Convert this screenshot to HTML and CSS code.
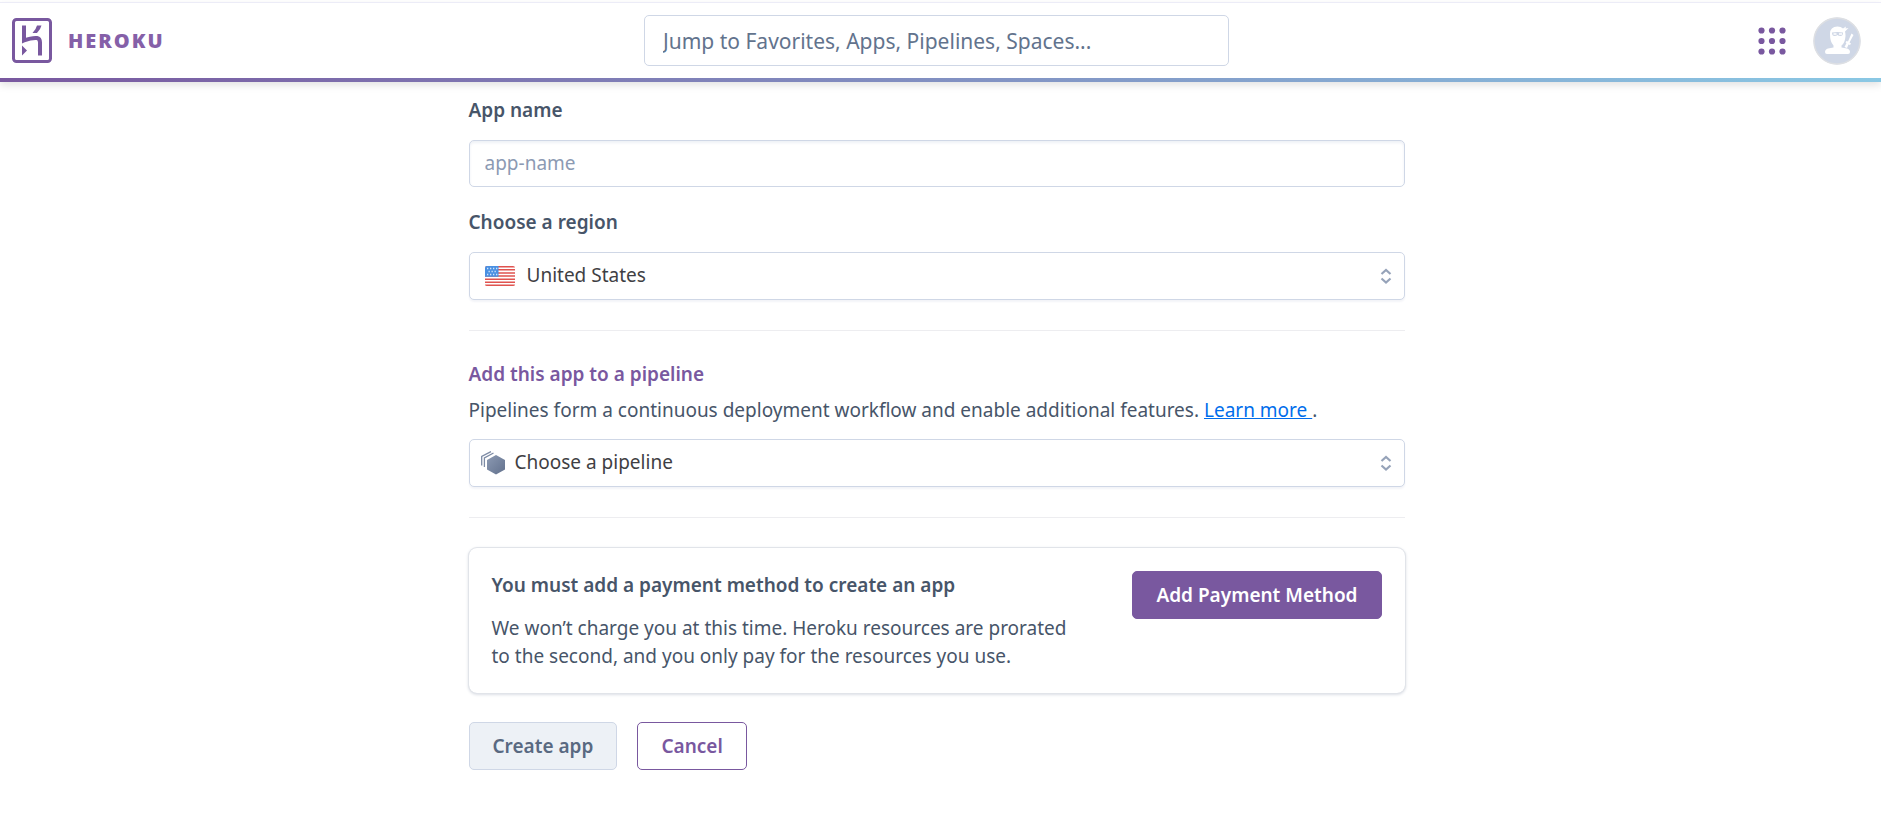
FILE: index.html
```html
<!DOCTYPE html>
<html lang="en">
<head>
<meta charset="utf-8">
<meta name="viewport" content="width=device-width, initial-scale=1">
<title>Create New App | Heroku</title>
<link rel="stylesheet" href="styles.css">
</head>
<body>
<header class="topbar">
  <a class="brand" href="#" aria-label="Heroku">
    <svg class="brand-mark" viewBox="0 0 40 45" aria-hidden="true">
      <rect x="1.5" y="1.5" width="37" height="42" rx="3" fill="none" stroke="#79589f" stroke-width="3"/>
      <path d="M12 7.5V22.500Q20 19.500 25 20Q28 20.500 28 24.500V37.500" fill="none" stroke="#79589f" stroke-width="4"/>
      <path d="M10 27.500L15 32.500L10 37.500Z M25 7.500H29.500Q28.500 11.500 25 15H20.500Q24 11.500 25 7.500Z" fill="#79589f"/>
    </svg>
    <span class="brand-name">HEROKU</span>
  </a>
  <input class="jump" type="search" aria-label="Jump to" placeholder="Jump to Favorites, Apps, Pipelines, Spaces...">
  <div class="tools">
    <button class="icon-button" type="button" aria-label="Apps menu">
      <svg class="dots" viewBox="0 0 28 28" fill="#79589f" aria-hidden="true">
        <circle cx="3.500" cy="3.500" r="3.100"/><circle cx="14" cy="3.500" r="3.100"/><circle cx="24.500" cy="3.500" r="3.100"/>
        <circle cx="3.500" cy="14" r="3.100"/><circle cx="14" cy="14" r="3.100"/><circle cx="24.500" cy="14" r="3.100"/>
        <circle cx="3.500" cy="24.500" r="3.100"/><circle cx="14" cy="24.500" r="3.100"/><circle cx="24.500" cy="24.500" r="3.100"/>
      </svg>
    </button>
    <button class="icon-button" type="button" aria-label="Account">
      <svg class="avatar" viewBox="0 0 48 48" aria-hidden="true">
        <circle cx="24" cy="24" r="23.500" fill="#cfd7e6"/>
        <circle cx="24" cy="24" r="23" fill="none" stroke="#dddfe3" stroke-width="1.500"/>
        <path d="M17 17Q17 9.500 24.500 9.500Q28 9.500 30 11.500L33 9.500L32.500 11.500L35.500 11L32 14.500Q32.500 16 32.500 19Q32 26 28.500 28.500V30.500L34 31.500Q37 32.500 37 35Q37 37 35 37H14Q12 37 12 35Q12 32.500 15 31.500L20.500 30.500V28.500Q17 25 17 17Z" fill="#fff"/>
        <path d="M38.500 16.500L40.500 18L36.500 25.500L38 26.500L37 28L35.500 27.500L34 31L31.500 30L33.500 26L32.500 25.500L33.500 24L35 24.500Z" fill="#fff"/>
        <path d="M19 15.500Q24.500 14.500 30 15.500Q30 19 27.500 19Q25.500 19 24.500 18Q23.500 19 21.500 19Q19 19 19 15.500Z" fill="#cfd7e6"/>
        <path d="M20.500 17H23.500M26 17H29" stroke="#fff" stroke-width="1.500"/>
      </svg>
    </button>
  </div>
</header>

<main class="page">
  <form class="new-app">
    <label class="label" for="app-name">App name</label>
    <input class="field" id="app-name" type="text" placeholder="app-name">

    <label class="label label-region" for="region">Choose a region</label>
    <div class="picker">
      <svg class="picker-icon flag" viewBox="0 0 30 20" aria-hidden="true">
        <rect width="30" height="20" rx="2" fill="#fff"/>
        <path d="M2 0H28Q30 0 30 1.500H0Q0 0 2 0ZM0 3.100H30V4.600H0ZM0 6.200H30V7.700H0ZM0 9.300H30V10.800H0ZM0 12.400H30V13.900H0ZM0 15.500H30V17H0ZM0 18.500H30Q30 20 28 20H2Q0 20 0 18.500Z" fill="#e0534f"/>
        <path d="M2 0H13.500V10.800H0V2Q0 0 2 0Z" fill="#4a90e2"/>
        <path d="M2 2.500H13M3.500 5.500H12M2 8.500H13" stroke="#cfe3fa" stroke-width="1.300" stroke-dasharray="1.300 1.700"/>
      </svg>
      <select class="field select select-region" id="region"><option>United States</option><option>Europe</option></select>
      <svg class="picker-arrows" viewBox="0 0 12 16" aria-hidden="true"><path d="M1.500 6L6 2L10.500 6M1.500 10.500L6 14.500L10.500 10.500" fill="none" stroke="#96a3b9" stroke-width="2.200"/></svg>
    </div>

    <section class="pipeline">
      <h2 class="pipeline-title">Add this app to a pipeline</h2>
      <p class="pipeline-text">Pipelines form a continuous deployment workflow and enable additional features. <a class="link" href="#">Learn more&nbsp;</a>.</p>
      <div class="picker">
        <svg class="picker-icon cube" viewBox="0 0 24 24" aria-hidden="true">
          <defs><linearGradient id="cube-fill" x1="0" y1="0" x2="1" y2="1"><stop offset="0" stop-color="#8c9ab3"/><stop offset="1" stop-color="#62718d"/></linearGradient></defs>
          <path d="M15 4L24 9V18.500L15 23.500L6 18.500V9Z" fill="url(#cube-fill)"/>
          <path d="M.700 14.500V5.500L10 .700M3.400 16V7L12.500 2" fill="none" stroke="#7d8ba5" stroke-width="1.300"/>
        </svg>
        <select class="field select select-pipeline" aria-label="Pipeline"><option>Choose a pipeline</option></select>
        <svg class="picker-arrows" viewBox="0 0 12 16" aria-hidden="true"><path d="M1.500 6L6 2L10.500 6M1.500 10.500L6 14.500L10.500 10.500" fill="none" stroke="#96a3b9" stroke-width="2.200"/></svg>
      </div>
    </section>

    <section class="payment">
      <div class="payment-copy">
        <h3 class="payment-title">You must add a payment method to create an app</h3>
        <p class="payment-text">We won’t charge you at this time. Heroku resources are prorated to the second, and you only pay for the resources you use.</p>
      </div>
      <button class="button button-primary" type="button">Add Payment Method</button>
    </section>

    <div class="actions">
      <button class="button button-disabled" type="submit" disabled>Create app</button>
      <button class="button button-outline" type="button">Cancel</button>
    </div>
  </form>
</main>
</body>
</html>
```
FILE: styles.css
```css
* { box-sizing: border-box; }

body {
  margin: 0;
  background: #fff;
  color: #475569;
  font-family: "Noto Sans", "Open Sans", sans-serif;
  font-size: 19px;
  line-height: 28px;
}

h2, h3, p { margin: 0; font-size: inherit; font-weight: 600; }
p { font-weight: 400; }

button, input, select { font: inherit; }

.topbar {
  display: grid;
  grid-template-columns: 1fr minmax(0, 585px) 1fr;
  align-items: center;
  margin-top: 3px;
  padding: 12px 20px 12px 12px;
  border-bottom: 4px solid;
  border-image: linear-gradient(90deg, #79589f, #8ac8e4) 1;
  box-shadow: 0 -1px #ececf7, 0 3px 8px rgba(0, 0, 0, 0.12);
}

.brand {
  display: flex;
  align-items: center;
  gap: 16px;
  color: #8560a8;
  text-decoration: none;
}

.brand-mark { width: 40px; height: 45px; }

.brand-name {
  font-family: "Open Sans", sans-serif;
  font-size: 20px;
  font-weight: 800;
  letter-spacing: 2px;
}

.jump {
  width: 100%;
  height: 51px;
  padding: 0 18px;
  border: 1px solid #cfd7e6;
  border-radius: 5px;
  background: #fff;
  font-size: 21px;
}

.jump::placeholder { color: #62738d; opacity: 1; }

.tools {
  display: flex;
  justify-content: flex-end;
  align-items: center;
  gap: 27px;
}

.icon-button {
  display: flex;
  padding: 0;
  border: 0;
  background: none;
}

.dots { width: 28px; height: 28px; }
.avatar { width: 48px; height: 48px; }

.page { padding: 14px 8px 54px 0; }

.new-app {
  max-width: 936px;
  margin: 0 auto;
}

.label {
  display: block;
  margin-bottom: 16px;
  font-weight: 600;
}

.label-region { margin-top: 21px; }

.field {
  display: block;
  width: 100%;
  height: 48px;
  padding: 0 15px 2px;
  border: 1px solid #cfd7e6;
  border-radius: 5px;
  background: #fff;
  color: #3f3f44;
}

input.field { height: 47px; box-shadow: inset 0 2px 3px #eef1f6; }

.field::placeholder { color: #8c9ab3; opacity: 1; }

.picker { position: relative; }

.select {
  appearance: none;
  box-shadow: 0 2px 2px #f3f4f8;
}

.select-region { padding-left: 57px; }
.select-pipeline { padding-left: 45px; }

.picker-icon, .picker-arrows {
  position: absolute;
  top: 0;
  bottom: 0;
  margin: auto 0;
  pointer-events: none;
}

.flag { left: 16px; width: 30px; height: 20px; }
.cube { left: 12px; width: 24px; height: 24px; }
.picker-arrows { right: 13px; width: 12px; height: 16px; }

.pipeline {
  margin: 30px 0;
  padding: 29px 0 30px;
  border: solid #ededf0;
  border-width: 1px 0;
}

.pipeline-title { color: #79589f; }
.pipeline-text { margin: 8px 0 15px; }
.link { color: #006deb; }

.payment {
  display: flex;
  justify-content: space-between;
  align-items: flex-start;
  gap: 24px;
  padding: 23px;
  border-radius: 8px;
  box-shadow: 0 0 0 1px #e1e4e9, 0 1px 3px 1px #dcdfe6;
}

.payment-copy { max-width: 590px; }
.payment-text { margin-top: 15px; }

.button {
  flex: none;
  height: 48px;
  padding: 0 23px;
  border: 1px solid #79589f;
  border-radius: 5px;
  font-weight: 600;
}

.button-primary { background: #79589f; color: #fff; }
.button-disabled { border-color: #cfd7e6; background: #edf1f6; color: #596981; }
.button-outline { background: #fff; color: #79589f; }

.actions {
  display: flex;
  gap: 20px;
  margin-top: 29px;
}
```
